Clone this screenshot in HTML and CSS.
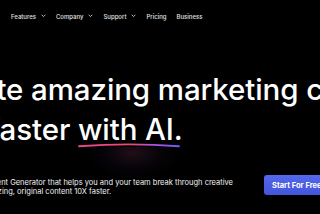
FILE: index.html
```
<!DOCTYPE html>
<html lang="en">
<head>
<meta charset="utf-8">
<link rel="stylesheet" href="styles.css">
</head>
<body>
<nav class="nav">
  <a class="nav-item">Features <svg class="chev" viewBox="0 0 6 4"><path d="M0.8 0.8 L3 3 L5.2 0.8"/></svg></a>
  <a class="nav-item">Company <svg class="chev" viewBox="0 0 6 4"><path d="M0.8 0.8 L3 3 L5.2 0.8"/></svg></a>
  <a class="nav-item">Support <svg class="chev" viewBox="0 0 6 4"><path d="M0.8 0.8 L3 3 L5.2 0.8"/></svg></a>
  <a class="nav-item">Pricing</a>
  <a class="nav-item">Business</a>
</nav>
<main class="hero">
  <h1 class="title">
    <span class="line line-1">Create amazing marketing content</span>
    <span class="line line-2">faster <span class="hl">with AI.<svg class="swoosh" viewBox="0 0 102 6" preserveAspectRatio="none"><defs><linearGradient id="g" x1="0" x2="1" y1="0" y2="0"><stop offset="0" stop-color="#e9458f"/><stop offset="0.5" stop-color="#ef4a6f"/><stop offset="0.78" stop-color="#a553e8"/><stop offset="1" stop-color="#6d5cf2"/></linearGradient></defs><path d="M1 4.2 Q51 0.6 101 4.2" fill="none" stroke="url(#g)" stroke-width="1.9" stroke-linecap="round"/></svg></span></span>
  </h1>
  <div class="row">
    <p class="lead">
      <span class="pl pl-1">Copy.ai is an AI-powered Content Generator that helps you and your team break through creative</span>
      <span class="pl pl-2">blocks to create amazing, original content 10X faster.</span>
    </p>
    <a class="cta">Start For Free</a>
  </div>
</main>
</body>
</html>
```
FILE: styles.css
```
html, body {
  margin: 0;
  padding: 0;
  background: #000;
  overflow: hidden;
}
body {
  width: 320px;
  height: 214px;
  font-family: "Inter", "Liberation Sans", sans-serif;
  color: #fff;
}
.nav {
  height: 32px;
  display: flex;
  align-items: center;
  gap: 10px;
  padding-left: 11px;
}
.nav-item {
  display: flex;
  align-items: center;
  gap: 5px;
  font-size: 6px;
  font-weight: 500;
  color: #e2e2e2;
  white-space: nowrap;
}
.chev {
  width: 5px;
  height: 3.5px;
  fill: none;
  stroke: #e2e2e2;
  stroke-width: 1;
}
.hero {
  position: relative;
}
.title {
  margin: 37px 0 0 0;
  font-size: 29.5px;
  line-height: 40px;
  font-weight: 500;
  letter-spacing: -0.1px;
  white-space: nowrap;
}
.line {
  display: block;
}
.line-1 { margin-left: -70px; }
.line-2 { margin-left: -11px; }
.hl {
  position: relative;
  display: inline-block;
}
.swoosh {
  position: absolute;
  left: 0;
  bottom: 1px;
  width: 102px;
  height: 6px;
}
.hl::after {
  content: "";
  position: absolute;
  left: 10px;
  top: 38px;
  width: 90px;
  height: 30px;
  background: radial-gradient(ellipse at 50% 20%, rgba(90, 40, 70, 0.35), rgba(40, 20, 60, 0.15) 45%, rgba(0,0,0,0) 75%);
  pointer-events: none;
}
.row {
  display: flex;
  align-items: flex-start;
  margin-top: 26px;
  white-space: nowrap;
}
.lead {
  margin: 2.5px 0 0 0;
  font-size: 7.5px;
  line-height: 9px;
  color: #f2f2f2;
  width: 264px;
  flex: none;
}
.pl { display: block; }
.pl-1 { margin-left: -111px; }
.pl-2 { margin-left: -76px; }
.cta {
  flex: none;
  height: 20px;
  padding: 0 10px 0 8px;
  display: flex;
  align-items: center;
  background: linear-gradient(180deg, #5468ea, #4355dc);
  border-radius: 3px;
  font-size: 7.5px;
  font-weight: 700;
  color: #fff;
}
```
